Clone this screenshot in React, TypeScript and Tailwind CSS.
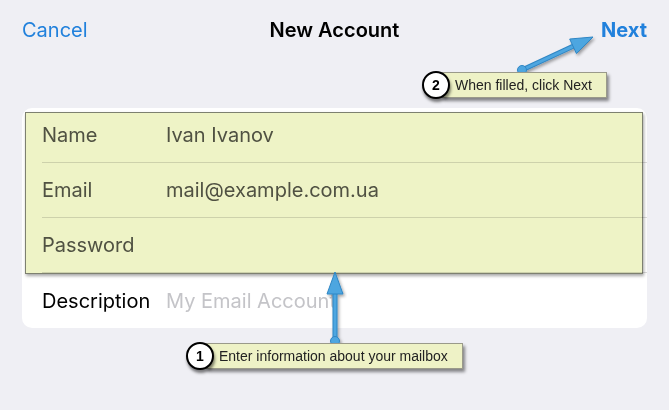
const rows = [
  { label: "Name", value: "Ivan Ivanov" },
  { label: "Email", value: "mail@example.com.ua" },
  { label: "Password", value: "" },
];

type Pt = { x1: number; y1: number; x2: number; y2: number };

const Arrow = ({ x1, y1, x2, y2 }: Pt) => {
  const len = Math.hypot(x2 - x1, y2 - y1);
  const ux = (x2 - x1) / len;
  const uy = (y2 - y1) / len;
  const bx = x2 - ux * 22;
  const by = y2 - uy * 22;
  const nx = -uy;
  const ny = ux;
  const head = `${x2},${y2} ${bx + nx * 8},${by + ny * 8} ${bx - nx * 8},${by - ny * 8}`;
  return (
    <g filter="url(#sh)">
      <line x1={x1} y1={y1} x2={bx} y2={by} stroke="#2f86c4" strokeWidth="5" strokeLinecap="round" />
      <line x1={x1} y1={y1} x2={bx} y2={by} stroke="#4ea6e0" strokeWidth="3" strokeLinecap="round" />
      <polygon points={head} fill="#4ea6e0" stroke="#2f86c4" strokeWidth="1" strokeLinejoin="round" />
      <circle cx={x1} cy={y1} r="4.5" fill="#4ea6e0" stroke="#2f86c4" strokeWidth="1" />
    </g>
  );
};

const Callout = ({ n, text, className }: { n: number; text: string; className: string }) => (
  <div className={`absolute flex items-center font-['Liberation_Sans',Arial,sans-serif] ${className}`}>
    <div className="relative z-10 flex h-[28px] w-[28px] items-center justify-center rounded-full border-2 border-black bg-white text-[14px] font-bold text-black shadow-[1px_3px_3px_rgba(0,0,0,0.5)]">
      {n}
    </div>
    <div className="-ml-[8px] flex h-[26px] items-center border border-[#9a9a8a] bg-[#eef2c6] pl-[12px] pr-[14px] text-[14px] text-[#222] shadow-[2px_3px_3px_rgba(0,0,0,0.45)]">
      {text}
    </div>
  </div>
);

export default function App() {
  return (
    <div className="relative h-[410px] w-full overflow-hidden bg-[#efeff4] font-['Inter',sans-serif]">
      <header className="grid h-[60px] grid-cols-3 items-center px-[22px] text-[20px]">
        <span className="justify-self-start text-[#2181dc]">Cancel</span>
        <span className="justify-self-center font-semibold text-black">New Account</span>
        <span className="justify-self-end font-bold text-[#2181dc]">Next</span>
      </header>

      <div className="mx-[22px] mt-[48px] overflow-hidden rounded-[10px] bg-white">
        {rows.map((r) => (
          <div key={r.label} className="ml-[20px] flex h-[55px] items-center border-b border-[#dcdcdc] text-[20px] text-[#555]">
            <span className="w-[124px]">{r.label}</span>
            <span>{r.value}</span>
          </div>
        ))}
        <div className="ml-[20px] flex h-[55px] items-center text-[20px]">
          <span className="w-[124px] text-black">Description</span>
          <span className="text-[#c4c4c8]">My Email Account</span>
        </div>
      </div>

      <div className="pointer-events-none absolute left-[25px] top-[112px] h-[162px] w-[618px] border border-[#7d8070] bg-[#eef3c6] mix-blend-multiply shadow-[1px_2px_3px_rgba(0,0,0,0.35)]" />

      <svg className="pointer-events-none absolute inset-0" width="669" height="410" viewBox="0 0 669 410">
        <defs>
          <filter id="sh" x="-20%" y="-20%" width="140%" height="140%">
            <feDropShadow dx="1.5" dy="2" stdDeviation="1.5" floodColor="#000" floodOpacity="0.35" />
          </filter>
        </defs>
        <Arrow x1={335} y1={341} x2={335} y2={272} />
        <Arrow x1={522} y1={70} x2={593} y2={37} />
      </svg>

      <Callout n={2} text="When filled, click Next" className="left-[422px] top-[71px]" />
      <Callout n={1} text="Enter information about your mailbox" className="left-[186px] top-[342px]" />
    </div>
  );
}
